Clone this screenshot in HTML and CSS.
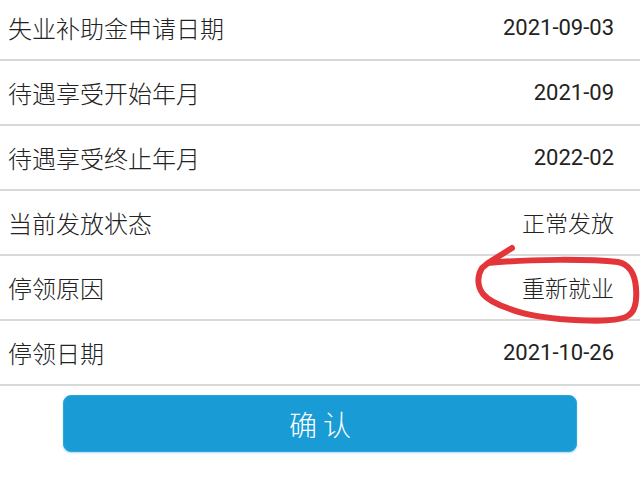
FILE: index.html
```html
<!DOCTYPE html>
<html lang="zh-CN">
<head>
<meta charset="utf-8">
<link rel="stylesheet" href="styles.css">
</head>
<body>
<div class="page">
  <div class="list">
    <div class="row"><span class="label">失业补助金申请日期</span><span class="value num">2021-09-03</span></div>
    <div class="row"><span class="label">待遇享受开始年月</span><span class="value num">2021-09</span></div>
    <div class="row"><span class="label">待遇享受终止年月</span><span class="value num">2022-02</span></div>
    <div class="row"><span class="label">当前发放状态</span><span class="value cjk">正常发放</span></div>
    <div class="row"><span class="label">停领原因</span><span class="value cjk">重新就业</span></div>
    <div class="row"><span class="label">停领日期</span><span class="value num">2021-10-26</span></div>
  </div>
  <div class="actions">
    <button class="confirm">确 认</button>
  </div>
  <svg class="mark" viewBox="0 0 640 500" width="640" height="500" aria-hidden="true">
    <path d="M512 248 L488 263 C530 259 590 259 618 262 C629 264 635 274 636 288 C637 301 635 311 629 315 C622 321 600 322 560 319 C540 317 520 313 510 309 C498 305 488 300 483 294 C477 286 477 276 482 268 L488 263" fill="none" stroke="#e3363b" stroke-width="6" stroke-linecap="round" stroke-linejoin="round"/>
  </svg>
</div>
</body>
</html>
```
FILE: styles.css
```css
html, body {
  margin: 0;
  padding: 0;
  background: #ffffff;
}
.page {
  position: relative;
  width: 640px;
  height: 500px;
  overflow: hidden;
  font-family: "Noto Sans CJK SC", "Noto Sans", sans-serif;
  font-weight: 300;
  color: #222222;
}
.list {
  margin-top: -4px;
}
.row {
  display: flex;
  align-items: center;
  justify-content: space-between;
  height: 63px;
  border-bottom: 2px solid #d9d9d9;
  padding: 0 26px 0 8px;
}
.label {
  font-size: 24px;
  line-height: 1;
}
.value {
  line-height: 1;
}
.num {
  font-family: Roboto, "Noto Sans CJK SC", sans-serif;
  font-weight: 400;
  font-size: 22px;
}
.cjk {
  font-size: 23px;
}
.actions {
  display: flex;
  justify-content: flex-start;
  padding: 9px 0 0 63px;
}
.confirm {
  width: 514px;
  height: 57px;
  border: 1px solid #2ba6de;
  border-radius: 8px;
  background: #199bd5;
  color: #ffffff;
  font-family: "Noto Sans CJK SC", sans-serif;
  font-weight: 300;
  font-size: 28px;
  line-height: 1;
  padding: 0;
  box-shadow: 0 1px 2px rgba(120, 190, 230, 0.6);
}
.mark {
  position: absolute;
  left: 0;
  top: 0;
  pointer-events: none;
}
```
